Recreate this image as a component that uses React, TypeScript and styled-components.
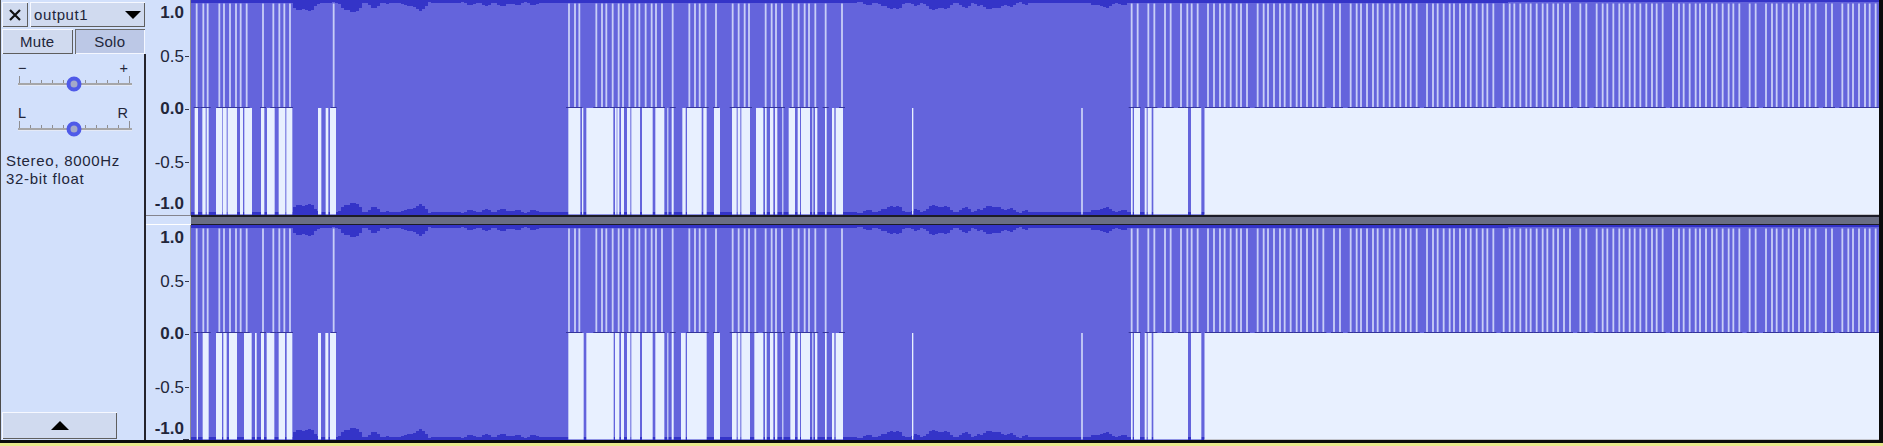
import React from 'react';
import styled, { createGlobalStyle } from 'styled-components';

const GlobalStyle = createGlobalStyle`
  html, body {
    margin: 0;
    padding: 0;
    overflow: hidden;
    background: #e8e88c;
  }
`;

const PANEL_BG = '#d2e0fb';
const WAVE_BLUE = '#6464dc';
const WAVE_DARK = '#3434c8';
const BLANK = '#e8f0ff';
const LINE = '#c8cef7';

// x positions were read off 3x crops, so each list keeps the crop's offset
const px = (offset: number, zs: number[]) => zs.map((z) => offset + z / 3);
const spans = (offset: number, zs: number[][]) =>
  zs.map(([a, b]) => [offset + a / 3, offset + b / 3]);

const upperA = px(190, [20, 40, 53, 88, 102, 120, 138, 152, 170, 219, 250, 268, 283, 300, 431]);
const upperB = [27, 45, 58, 109, 126, 139, 158, 176, 189, 208, 226, 238, 257, 275, 288, 306, 338, 388, 405, 419, 437, 468, 518, 536, 554, 567];
const upperB2 = [617, 635, 648, 666, 698, 716, 734, 747, 766, 797, 846];
const upperRest = [
  ...px(1100, [95, 113, 145, 163, 195, 212, 243, 262, 275, 293, 324, 342, 360, 374, 392, 410, 423, 441, 473, 491, 504, 522, 540, 554, 572, 590, 603, 621, 639, 652, 670, 702, 720, 752, 770, 783, 801, 819, 833, 851, 869]),
  ...px(1390, [13, 31, 48, 62, 80, 111, 129, 143, 161, 179, 192, 210, 228, 242, 260, 278, 292, 310, 341, 359, 373, 391, 409, 422, 440, 458, 472, 490, 504, 522, 540, 571, 589, 620, 638, 652, 670, 688, 701, 719]),
  ...px(1633, [5, 22, 40, 57, 71, 89, 120, 138, 152, 170, 188, 201, 219, 237, 251, 269, 287, 301, 319, 350, 368, 399, 417, 431, 449, 467, 480, 498, 516, 530, 548, 579, 597, 628, 646, 660, 678, 696, 710, 728]),
];

const upperOne = [...upperA, ...px(560, [...upperB, ...upperB2]), ...upperRest];
const upperTwo = [...upperA, ...px(560, [...upperB, 586, ...upperB2]), ...upperRest];

const blankTail = [
  ...spans(840, [[216, 220], [724, 728]]),
  ...spans(1100, [[93, 98], [102, 120], [134, 140], [143, 155], [160, 264], [273, 304]]),
  [1204.5, 1880],
];

const blankOne = [
  ...spans(190, [[14, 24], [37, 47], [50, 56], [78, 97], [99, 110], [113, 141], [150, 159], [163, 186], [213, 223], [231, 254], [266, 286], [289, 307], [384, 394], [407, 415], [420, 438]]),
  ...spans(560, [[25, 61], [66, 70], [79, 160], [165, 170], [172, 178], [183, 192], [201, 211], [214, 240], [246, 278], [286, 313], [322, 325], [335, 341], [367, 377], [381, 425], [430, 440], [462, 480], [516, 530], [533, 541], [544, 570], [588, 610], [615, 620], [630, 640], [645, 652], [667, 670], [686, 705], [713, 720], [723, 750], [757, 760], [765, 772], [795, 800], [816, 823], [827, 849]]),
  ...blankTail,
];

const blankTwo = [
  ...spans(0, [[590, 594], [608, 626], [648, 666], [670, 680], [687, 711], [732, 755], [765, 770], [783, 792], [800, 823], [836, 855], [860, 877], [954, 963], [976, 985], [990, 1008]]),
  ...spans(560, [[25, 71], [79, 161], [165, 178], [183, 192], [201, 211], [214, 240], [246, 278], [286, 313], [322, 325], [335, 341], [363, 377], [381, 440], [462, 480], [516, 530], [533, 541], [544, 570], [583, 610], [615, 620], [630, 640], [645, 652], [667, 670], [691, 705], [713, 720], [723, 750], [757, 760], [765, 772], [795, 800], [816, 823], [827, 849]]),
  ...blankTail,
];

// depth of the darker peak band along the waveform
const peaks = [
  [191, 3], [291, 3], [294, 8], [300, 11], [308, 10], [315, 6], [322, 3], [338, 4], [344, 9], [351, 14], [357, 9], [362, 4],
  [368, 6], [375, 7], [381, 4], [392, 3], [405, 4], [412, 8], [418, 10], [424, 7], [429, 3], [445, 3], [470, 4], [505, 5], [508, 6], [514, 4], [560, 3],
  [840, 3], [870, 4], [884, 5], [890, 11], [896, 8], [902, 4], [920, 4], [930, 8], [937, 10], [945, 8], [952, 4], [962, 5], [966, 8], [970, 5],
  [980, 4], [987, 12], [993, 6], [1000, 8], [1006, 6], [1015, 4], [1040, 3], [1090, 3], [1095, 6], [1102, 7], [1110, 5], [1120, 4], [1131, 3], [1879, 2],
];

const depthAt = (x: number) => {
  for (let i = 1; i < peaks.length; i++) {
    const [x0, d0] = peaks[i - 1];
    const [x1, d1] = peaks[i];
    if (x <= x1) {
      const base = d0 + ((d1 - d0) * (x - x0)) / (x1 - x0);
      const noise = base > 3.5 ? Math.sin(x * 1.7) * 1.6 : 0;
      return Math.max(2, Math.round(base + noise));
    }
  }
  return 2;
};

const bandPath = (top: boolean) => {
  const edge = top ? 0 : 215;
  let d = `M191 ${edge}`;
  for (let x = 191; x < 1879; x += 3) {
    const y = top ? depthAt(x) : 215 - depthAt(x);
    d += `L${x} ${y}L${x + 3} ${y}`;
  }
  return `${d}L1879 ${edge}Z`;
};

const Page = styled.div`
  width: 1883px;
  height: 446px;
  display: flex;
  flex-direction: column;
  font-family: "Liberation Sans", Arial, sans-serif;
  color: #22263a;
`;

const Main = styled.div`
  display: flex;
  height: 440px;
  border-right: 4px solid #0a0a0a;
`;

const BottomEdge = styled.div`
  height: 3px;
  background: #0a0a0a;
`;

const Panel = styled.div`
  width: 146px;
  flex: none;
  display: flex;
  flex-direction: column;
  box-sizing: border-box;
  background: ${PANEL_BG};
  border-left: 1px solid #4c4c4c;
`;

const ButtonRow = styled.div`
  display: flex;
  gap: 2px;
  padding: 2px 1px 0 1px;
`;

const Bevel = styled.div<{ $pressed?: boolean }>`
  height: 25px;
  box-sizing: border-box;
  display: flex;
  align-items: center;
  justify-content: center;
  font-size: 15px;
  letter-spacing: 0.3px;
  background: ${(p) => (p.$pressed ? '#bcc8e6' : '#d0daef')};
  box-shadow: ${(p) =>
    p.$pressed
      ? 'inset 1px 1px 0 #6a6a6a, inset -1px -1px 0 #f4f7ff'
      : 'inset 1px 1px 0 #f6f8ff, inset -1px -1px 0 #5e5e5e'};
`;

const CloseButton = styled(Bevel)`
  width: 26px;
`;

const TitleButton = styled(Bevel)`
  flex: 1;
  justify-content: space-between;
  padding: 0 4px 0 4px;
  letter-spacing: 0.6px;
`;

const DropArrow = styled.span`
  width: 0;
  height: 0;
  border-left: 8px solid transparent;
  border-right: 8px solid transparent;
  border-top: 8px solid #000;
`;

const ToggleButton = styled(Bevel)`
  flex: 1;
`;

const PanelBody = styled.div`
  flex: 1;
  display: flex;
  flex-direction: column;
  border-right: 2px solid #24242c;
  padding-top: 6px;
`;

const SliderBlock = styled.div`
  padding: 0 11px 0 15px;
  height: 45px;
`;

const SliderLabels = styled.div`
  display: flex;
  justify-content: space-between;
  height: 11px;
  line-height: 16px;
  font-size: 14.5px;
  padding: 0 5px 0 2px;
`;

const Info = styled.div`
  margin-top: 2px;
  padding-left: 5px;
  font-size: 15px;
  line-height: 18px;
  letter-spacing: 0.7px;
  white-space: nowrap;
`;

const CollapseButton = styled(Bevel)`
  width: 115px;
  height: 27px;
  margin: auto 0 1px 1px;
`;

const UpArrow = styled.span`
  width: 0;
  height: 0;
  border-left: 9px solid transparent;
  border-right: 9px solid transparent;
  border-bottom: 9px solid #000;
`;

const Tracks = styled.div`
  flex: 1;
  display: flex;
  flex-direction: column;
`;

const Track = styled.div`
  display: flex;
  height: 215px;
`;

const Ruler = styled.div`
  width: 45px;
  flex: none;
  box-sizing: border-box;
  display: grid;
  grid-template-rows: 25px 63px 42px 65px 18px 1fr;
  background: ${PANEL_BG};
  border-right: 1px solid #8c8c96;
`;

const RulerLabel = styled.div<{ $major?: boolean; $tick?: boolean }>`
  display: flex;
  align-items: center;
  justify-content: flex-end;
  font-size: 17px;
  font-weight: ${(p) => (p.$major ? 700 : 400)};
  padding-right: ${(p) => (p.$tick ? 1 : 6)}px;

  &::after {
    content: '';
    display: ${(p) => (p.$tick ? 'block' : 'none')};
    width: 4px;
    height: 1px;
    margin-left: 1px;
    background: #33384c;
  }
`;

const RulerFoot = styled.div<{ $tick?: boolean }>`
  display: flex;
  align-items: flex-end;
  justify-content: flex-end;
  padding: 0 1px 0 0;

  &::after {
    content: '';
    display: ${(p) => (p.$tick ? 'block' : 'none')};
    width: 6px;
    height: 1px;
    background: #33384c;
  }
`;

const Separator = styled.div`
  display: flex;
  height: 10px;
`;

const SeparatorRuler = styled.div`
  width: 45px;
  flex: none;
  box-sizing: border-box;
  background: ${PANEL_BG};
  border-top: 1px solid #84848e;
  border-bottom: 1px solid #ffffff;
`;

const SeparatorBar = styled.div`
  flex: 1;
  box-sizing: border-box;
  background: #6a6e84;
  border-top: 2px solid #1c1c28;
  border-bottom: 1px solid #1c1c28;
`;

const Wave = styled.svg`
  display: block;
  flex: 1;
  width: 1688px;
  height: 215px;
`;

const Waveform = ({ lines, blanks }: { lines: number[]; blanks: number[][] }) => (
  <Wave viewBox="191 0 1688 215" preserveAspectRatio="none">
    <rect x="191" y="0" width="1688" height="215" fill={WAVE_BLUE} />
    <path d={bandPath(true)} fill={WAVE_DARK} />
    <path d={bandPath(false)} fill={WAVE_DARK} />
    {lines.map((x, i) => (
      <rect key={i} x={x - 0.9} y="3.5" width="1.8" height="103.5" fill={LINE} />
    ))}
    {lines.map((x, i) => (
      <rect key={i} x={x - 3} y="107" width="6" height="1" fill="#34349c" />
    ))}
    {blanks.map(([a, b], i) => (
      <rect key={i} x={a} y="108" width={b - a} height="106.5" fill={BLANK} />
    ))}
    <rect x="1204.5" y="214" width="675" height="1" fill="#c2c4cc" />
  </Wave>
);

const SliderTrack = () => (
  <svg width="116" height="22" viewBox="0 0 116 22" style={{ display: 'block', marginLeft: 1 }}>
    {Array.from({ length: 11 }, (_, i) => {
      const x = 2 + i * 11;
      const tall = i === 0 || i === 10;
      return <rect key={i} x={x} y={tall ? 5 : 9} width="1" height={tall ? 7 : 3} fill="#8e8e92" />;
    })}
    <rect x="1" y="12" width="114" height="2" fill="#a6a6a8" />
    <rect x="1" y="14" width="114" height="1" fill="#e4e9f6" />
    <circle cx="57" cy="13" r="5.5" fill="#a4a9c8" stroke="#4f5ae8" strokeWidth="4" />
  </svg>
);

const RulerColumn = ({ foot }: { foot?: boolean }) => (
  <Ruler>
    <RulerLabel $major>1.0</RulerLabel>
    <RulerLabel $tick>0.5</RulerLabel>
    <RulerLabel $major $tick>0.0</RulerLabel>
    <RulerLabel $tick>-0.5</RulerLabel>
    <RulerLabel $major>-1.0</RulerLabel>
    <RulerFoot $tick={foot} />
  </Ruler>
);

export default function App() {
  return (
    <Page>
      <GlobalStyle />
      <Main>
        <Panel>
          <ButtonRow>
            <CloseButton>
              <svg width="14" height="14" viewBox="0 0 14 14">
                <path d="M2 2L12 12M12 2L2 12" stroke="#111" strokeWidth="2.2" />
              </svg>
            </CloseButton>
            <TitleButton>
              output1
              <DropArrow />
            </TitleButton>
          </ButtonRow>
          <ButtonRow>
            <ToggleButton>Mute</ToggleButton>
            <ToggleButton $pressed>Solo</ToggleButton>
          </ButtonRow>
          <PanelBody>
            <SliderBlock>
              <SliderLabels>
                <span>−</span>
                <span>+</span>
              </SliderLabels>
              <SliderTrack />
            </SliderBlock>
            <SliderBlock>
              <SliderLabels>
                <span>L</span>
                <span>R</span>
              </SliderLabels>
              <SliderTrack />
            </SliderBlock>
            <Info>
              Stereo, 8000Hz
              <br />
              32-bit float
            </Info>
            <CollapseButton>
              <UpArrow />
            </CollapseButton>
          </PanelBody>
        </Panel>
        <Tracks>
          <Track>
            <RulerColumn />
            <Waveform lines={upperOne} blanks={blankOne} />
          </Track>
          <Separator>
            <SeparatorRuler />
            <SeparatorBar />
          </Separator>
          <Track>
            <RulerColumn foot />
            <Waveform lines={upperTwo} blanks={blankTwo} />
          </Track>
        </Tracks>
      </Main>
      <BottomEdge />
    </Page>
  );
}
